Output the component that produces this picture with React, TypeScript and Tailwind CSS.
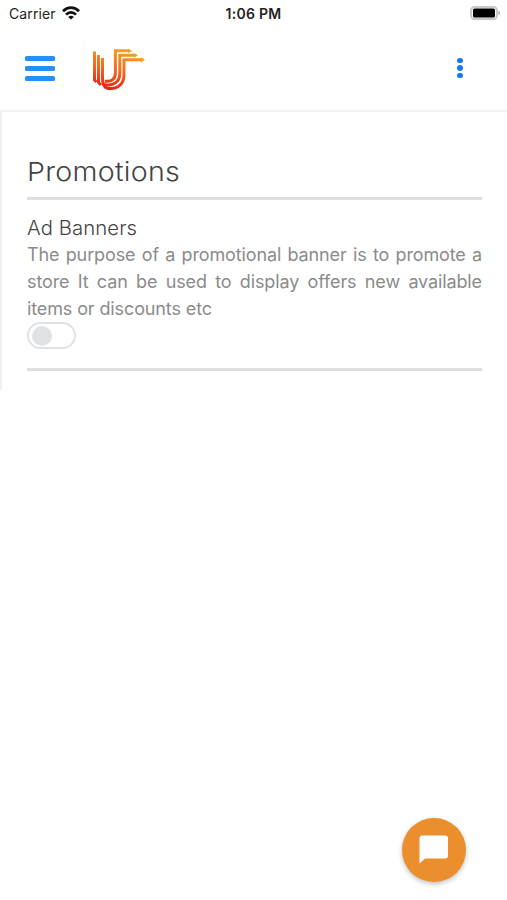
import React from "react";

const Logo: React.FC = () => (
  <svg width="60" height="50" viewBox="0 0 60 50" fill="none">
    <defs>
      <linearGradient
        id="logo"
        gradientUnits="userSpaceOnUse"
        x1="34"
        y1="5"
        x2="24"
        y2="45"
      >
        <stop offset="0" stopColor="#eda022" />
        <stop offset="0.5" stopColor="#f26d20" />
        <stop offset="1" stopColor="#e62415" />
      </linearGradient>
    </defs>
    <g stroke="url(#logo)" strokeWidth="3">
      <path d="M9.5 7.5V36L11.5 38" />
      <path d="M13.5 11V38.5L16 41" />
      <path d="M17.5 14V34C17.5 41 20 44.6 25 44.6C34 44.6 39 39 39 31V15.8H57" />
      <path d="M19.5 40.7C29 42.5 34.8 37 34.8 30V11.3H50" />
      <path d="M20 37.2C27 38 30.4 35 30.4 29V6.8H44" />
    </g>
    <path
      d="M43 4.4L47 6.8L43 9.2ZM49 8.9L53 11.3L49 13.7ZM56 13.2L60 15.8L56 18.4Z"
      fill="#e9a52c"
    />
  </svg>
);

const StatusBar: React.FC = () => (
  <div className="grid h-7 grid-cols-3 items-center pb-[2px] text-[14px] text-[#222]">
    <div className="flex items-center gap-[6px] pl-[9px]">
      <span className="tracking-[0.1px]">Carrier</span>
      <svg width="18" height="14" viewBox="0 0 18 14" fill="none">
        <g stroke="#111" strokeWidth="2.7">
          <path d="M1 5.2C5.5 0.5 12.5 0.5 17 5.2" />
          <path d="M4 8.6C7 5.6 11 5.6 14 8.6" />
        </g>
        <path d="M9 13.5L6.2 10.9C7.8 9.5 10.2 9.5 11.8 10.9Z" fill="#111" />
      </svg>
    </div>
    <span className="text-center font-semibold tracking-[0.3px]">1:06 PM</span>
    <div className="flex justify-end pr-[6px]">
      <svg width="31" height="14" viewBox="0 0 31 14">
        <rect
          x="1"
          y="1"
          width="26"
          height="12"
          rx="3.5"
          fill="#fff"
          stroke="#c8c8c8"
          strokeWidth="1.9"
        />
        <rect x="3" y="2.6" width="22" height="8.8" rx="1.5" fill="#000" />
        <path d="M28.5 5V9C30.6 8.2 30.6 5.8 28.5 5Z" fill="#aaa" />
      </svg>
    </div>
  </div>
);

const App: React.FC = () => {
  return (
    <div className="relative h-[900px] w-[507px] overflow-hidden bg-white font-['Inter',sans-serif]">
      <StatusBar />

      {/* Header */}
      <header className="flex h-[84px] items-start border-b-2 border-[#f4f4f4] pl-[25px]">
        <button className="mt-7 flex flex-col gap-[5px]" aria-label="Menu">
          <span className="h-[5px] w-[30px] rounded-[1.5px] bg-[#2290f8]" />
          <span className="h-[5px] w-[30px] rounded-[1.5px] bg-[#2290f8]" />
          <span className="h-[5px] w-[30px] rounded-[1.5px] bg-[#2290f8]" />
        </button>
        <div className="mt-4 ml-[29px] h-[50px] w-[62px] border-l border-[#fafafa]">
          <Logo />
        </div>
        <button
          className="mt-[30px] mr-[44px] ml-auto flex flex-col gap-[2.2px]"
          aria-label="More"
        >
          <span className="h-[5.2px] w-[5.6px] rounded-full bg-[#1478f2]" />
          <span className="h-[5.2px] w-[5.6px] rounded-full bg-[#1478f2]" />
          <span className="h-[5.2px] w-[5.6px] rounded-full bg-[#1478f2]" />
        </button>
      </header>

      {/* Promotions */}
      <main className="h-[278px] border-l-2 border-[#f0f0f0] pt-[41px] pr-[25px] pl-[25px]">
        <h1 className="h-[44px] origin-left scale-x-[1.1] text-[26px] leading-[37px] font-light tracking-[0.25px] text-[#444]">
          Promotions
        </h1>
        <hr className="border-t-[3px] border-[#dedede]" />
        <h2 className="mt-[15px] origin-left scale-x-[1.04] text-[19.5px] leading-[26px] font-light tracking-[0.1px] text-[#444]">
          Ad Banners
        </h2>
        <p className="text-justify text-[18px] leading-[27px] tracking-[-0.12px] text-[#8b8b8b]">
          The purpose of a promotional banner is to promote a store It can be
          used to display offers new available items or discounts etc
        </p>
        <div className="flex h-[27px] w-[49px] items-center rounded-full border-2 border-[#dfe1e2] pl-[3px]">
          <span className="h-5 w-5 rounded-full bg-[#dfe3e4]" />
        </div>
        <hr className="mt-[19px] border-t-[3px] border-[#dedede]" />
      </main>

      {/* Chat */}
      <button
        className="absolute top-[818px] left-[402px] flex h-16 w-16 items-center justify-center rounded-full bg-[#eb8e2d] pr-[1px] pb-[2px] shadow-[0_2px_5px_rgba(0,0,0,0.25)]"
        aria-label="Chat"
      >
        <svg width="29" height="29" viewBox="0 0 29 29">
          <path
            d="M3 0.5H26Q29 0.5 29 3.5V20.5Q29 23.5 26 23.5H6L0.5 28.5V3.5Q0.5 0.5 3 0.5Z"
            fill="#fff"
          />
        </svg>
      </button>
    </div>
  );
};

export default App;
